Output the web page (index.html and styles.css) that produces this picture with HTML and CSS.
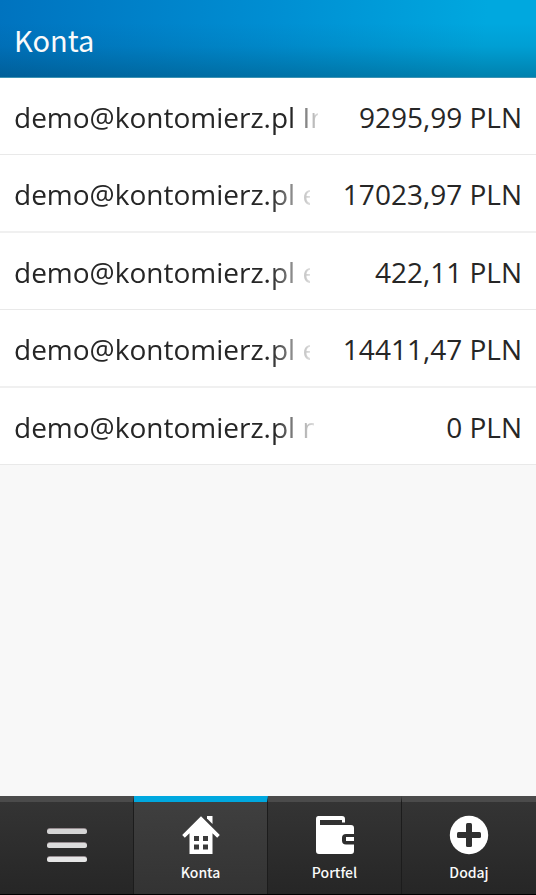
FILE: index.html
```html
<!DOCTYPE html>
<html lang="pl">
<head>
<meta charset="utf-8">
<meta name="viewport" content="width=device-width, initial-scale=1">
<title>Konta</title>
<link rel="stylesheet" href="styles.css">
</head>
<body>
<header class="title-bar"><h1>Konta</h1></header>
<main class="content">
  <ul class="accounts">
    <li class="account"><span class="name name-long">demo@kontomierz.pl In</span><span class="amount">9295,99 PLN</span></li>
    <li class="account"><span class="name">demo@kontomierz.pl e</span><span class="amount">17023,97 PLN</span></li>
    <li class="account"><span class="name">demo@kontomierz.pl e</span><span class="amount">422,11 PLN</span></li>
    <li class="account"><span class="name">demo@kontomierz.pl e</span><span class="amount">14411,47 PLN</span></li>
    <li class="account"><span class="name name-medium">demo@kontomierz.pl n</span><span class="amount">0 PLN</span></li>
  </ul>
</main>
<nav class="tabs">
  <button class="tab tab-menu" type="button" aria-label="Menu">
    <svg width="40" height="36" viewBox="0 0 40 36" aria-hidden="true">
      <g fill="#968c90"><rect width="40" height="6" rx="3"/><rect y="14" width="40" height="6" rx="3"/><rect y="28" width="40" height="6" rx="3"/></g>
      <rect y="1" width="40" height="5" rx="2.5" fill="#d4d4d4"/>
      <rect y="15" width="40" height="5" rx="2.5" fill="#dcdcdc"/>
      <rect y="29" width="40" height="5" rx="2.5" fill="#e6e6e6"/>
    </svg>
  </button>
  <button class="tab tab-active" type="button" aria-current="page">
    <svg width="40" height="40" viewBox="0 0 40 40" aria-hidden="true">
      <path fill="#fff" fill-rule="evenodd" d="M20 1.2 38.8 20l-2.6 2.800-4.700-4.500V39h-23V18.300L3.800 22.800 1.200 20ZM13 21v5h5v-5Zm9 0v5h5v-5Zm-9 8.500v5h5v-5Zm9 0v5h5v-5Z"/>
      <path fill="#fff" d="M26 1h5.500v8L26 3.500Z"/>
    </svg>
    <span>Konta</span>
  </button>
  <button class="tab" type="button">
    <svg width="40" height="40" viewBox="0 0 40 40" aria-hidden="true">
      <path fill="#fff" fill-rule="evenodd" d="M3.500 1H27q3 0 3 3v3.500h-3V5H5v5h31q3 0 3 3v6h-8q-4 0-4 4v2.500q0 4 4 4h8V36q0 3-3 3H4q-3 0-3-3V4q0-3 2.500-3Z"/>
      <path fill="#fff" d="M31 22h8v4h-8Z"/>
    </svg>
    <span>Portfel</span>
  </button>
  <button class="tab" type="button">
    <svg width="40" height="40" viewBox="0 0 40 40" aria-hidden="true">
      <circle cx="20" cy="20" r="19.200" fill="#fff"/>
      <g fill="#303030"><rect x="17" y="8" width="6" height="24" rx="1.500"/><rect x="8" y="17" width="24" height="6" rx="1.500"/></g>
    </svg>
    <span>Dodaj</span>
  </button>
</nav>
</body>
</html>
```
FILE: styles.css
```css
* { box-sizing: border-box; }

body {
  margin: 0;
  min-height: 100vh;
  display: flex;
  flex-direction: column;
  background: #f8f8f8;
  color: #262626;
  font-family: "Noto Sans CJK JP", "Noto Sans", sans-serif;
}

.title-bar {
  height: 78px;
  padding: 0 14px;
  display: flex;
  align-items: center;
  border-bottom: 1px solid #3c93b4;
  color: #fafafa;
  background:
    linear-gradient(to bottom, transparent 30%, rgba(0, 55, 80, 0.08) 60%, rgba(0, 55, 80, 0.34)),
    linear-gradient(95deg, #0073bf, #008ed2 50%, #00a8df 90%);
}

.title-bar h1 {
  margin: 0;
  font-size: 29px;
  font-weight: 400;
  line-height: 38px;
}

.content { flex: 1; }

.accounts {
  margin: 0;
  padding: 0;
  list-style: none;
}

.account {
  display: flex;
  align-items: center;
  justify-content: space-between;
  padding: 20px 14px 18px;
  background: #fff;
  border-bottom: 1px solid #e9e9e9;
  font-family: "Open Sans", "Noto Sans", sans-serif;
  font-size: 28px;
  line-height: 38px;
  white-space: nowrap;
}

.account:nth-child(even) { border-bottom: 2px solid #f0f0f0; }

.name {
  width: 296px;
  overflow: hidden;
  mask-image: linear-gradient(to left, rgba(0, 0, 0, 0.15), #000 40px);
}

.name-medium { width: 300px; }

.name-long {
  width: 304px;
  mask-image: linear-gradient(to left, rgba(0, 0, 0, 0.15), #000 24px);
}

.tabs {
  display: grid;
  grid-template-columns: repeat(4, 1fr);
  height: 99px;
  border-bottom: 1px solid #000;
}

.tab {
  display: flex;
  flex-direction: column;
  align-items: center;
  padding: 13px 0 0;
  border: 0;
  border-top: 6px solid #4b4b4b;
  border-right: 1px solid #1c1c1c;
  background: linear-gradient(#343434, #262626);
  color: #fafafa;
  font-family: inherit;
  font-size: 14px;
  font-weight: 500;
  line-height: 20px;
}

.tab:last-child { border-right: 0; }
.tab-menu { padding-top: 26px; }
.tab span { margin-top: 7px; }

.tab-active {
  border-top-color: #00a8df;
  background: linear-gradient(#3f3f3f, #333);
}
```
